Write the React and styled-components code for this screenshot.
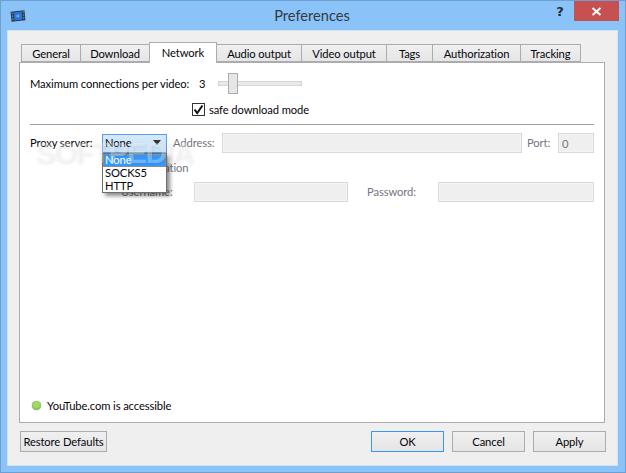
import React from "react";
import styled, { createGlobalStyle } from "styled-components";

const Global = createGlobalStyle`
  html, body { margin: 0; padding: 0; background: #8ac3f8; }
  * { box-sizing: border-box; }
`;

const Window = styled.div`
  width: 626px; height: 473px;
  display: flex; flex-direction: column;
  background: #8ac3f8;
  border: 1px solid #6f9fd2;
  padding: 0 7px 6px 6px;
  font-family: Lato, "Open Sans", sans-serif;
  font-size: 11.2px;
  letter-spacing: -0.1px;
  color: #05050c;
  white-space: nowrap;
  overflow: hidden;
`;
const TitleBar = styled.div`
  height: 29px; flex: none;
  display: flex; align-items: flex-start;
  position: relative;
  margin-right: -6px;
`;
const AppIcon = styled.svg`
  width: 16px; height: 14px; margin: 8px 0 0 3px; flex: none;
`;
const Title = styled.div`
  flex: 1; text-align: center;
  font-size: 14.6px; letter-spacing: 0; line-height: 29px; color: #333a44;
  padding-left: 52px;
`;
const Help = styled.div`
  width: 28px; text-align: center; flex: none;
  font: bold 13px/20px "DejaVu Sans", sans-serif; color: #222b36;
  padding-top: 1px;
`;
const Close = styled.div`
  width: 45px; height: 20px; flex: none;
  background: #c75050; display: flex; align-items: center; justify-content: center;
  margin-right: 5px;
`;
const Client = styled.div`
  flex: 1; min-height: 0;
  display: flex; flex-direction: column;
  background: #efefef;
  border: 1px solid #d4e2ef;
  padding: 11px 12px 13px 11px;
`;
const Tabs = styled.div`
  display: flex; height: 21px; padding-left: 2px; position: relative; z-index: 1; flex: none;
`;
const Tab = styled.div`
  width: ${p => p.$w}px;
  margin-top: ${p => (p.$active ? 0 : 2)}px;
  margin-bottom: ${p => (p.$active ? 0 : 1)}px;
  margin-right: -1px;
  border: 1px solid #acacac;
  border-bottom: ${p => (p.$active ? "none" : "1px solid #acacac")};
  background: ${p => (p.$active ? "#fff" : "linear-gradient(#f0f0f0, #e5e5e5)")};
  text-align: center;
  line-height: ${p => (p.$active ? 19 : 17)}px;
  position: relative;
  z-index: ${p => (p.$active ? 2 : 0)};
`;
const Pane = styled.div`
  flex: 1; min-height: 0;
  margin-top: -1px;
  background: #fff;
  border: 1px solid #acacac;
  padding: 10px 10px 9px;
  display: flex; flex-direction: column;
  position: relative;
`;
const ConnRow = styled.div`
  display: flex; align-items: center; height: 21px; flex: none;
`;
const ConnLabel = styled.span`width: 169px; flex: none;`;
const ConnValue = styled.span`width: 19px; flex: none;`;
const Slider = styled.div`
  width: 84px; height: 21px; flex: none;
  display: flex; align-items: center; position: relative;
`;
const Groove = styled.div`
  width: 100%; height: 5px; background: #e7eae7; border: 1px solid #d6d6d6;
`;
const Handle = styled.div`
  position: absolute; left: 10px; top: 0;
  width: 10px; height: 21px;
  background: #e6e6e6; border: 1px solid #acacac;
`;
const CheckRow = styled.label`
  display: flex; align-items: center; gap: 4px;
  margin: 9px 0 0 162px; height: 13px; flex: none;
`;
const CheckBox = styled.span`
  width: 13px; height: 13px; flex: none; background: #fff; border: 1px solid #333;
  display: flex; align-items: center; justify-content: center;
`;
const Separator = styled.div`
  height: 1px; background: #a0a0a0; margin: 8px 0; flex: none;
`;
const FieldRow = styled.div`
  display: flex; align-items: center; height: 20px; flex: none;
  margin-left: ${p => p.$indent || 0}px;
`;
const FieldLabel = styled.span`
  width: ${p => p.$w}px; flex: none;
  margin-left: ${p => p.$ml || 0}px;
  padding-bottom: 2px;
  color: ${p => (p.$disabled ? "#75757f" : "inherit")};
`;
const TextBox = styled.div`
  width: ${p => p.$w}px; height: 20px; flex: none;
  background: #efefef; border: 1px solid #d9d9d9;
  box-shadow: inset 0 0 0 1px #f4f4f4;
  color: #75757f; line-height: 20px; padding-left: 3px;
`;
const Combo = styled.div`
  width: 65px; height: 19px; flex: none; position: relative;
  background: linear-gradient(#d5e9fa, #c6e2f9);
  border: 1px solid #569de5;
  display: flex; align-items: center; justify-content: space-between;
  padding: 0 5px 1px 2px;
`;
const Arrow = styled.span`
  width: 0; height: 0;
  border-left: 4px solid transparent; border-right: 4px solid transparent;
  border-top: 5px solid #333;
`;
const Popup = styled.div`
  position: absolute; left: -1px; top: 18px; width: 65px; height: 40px;
  background: #fff; border: 1px solid #6d6d6d;
  box-shadow: 3px 3px 4px rgba(0,0,0,.45);
  z-index: 3;
`;
const PopupItem = styled.div`
  height: 13px; line-height: 12px; padding-left: 2px;
  color: ${p => (p.$active ? "#fff" : "#05050c")};
  background: ${p => (p.$active ? "#3399ff" : "transparent")};
  outline: ${p => (p.$active ? "1px dotted #e0861a" : "none")};
  outline-offset: -1px;
`;
const AuthRow = styled.div`
  margin: 7px 0 6px 87px; height: 16px; line-height: 16px; flex: none;
  color: #75757f;
`;
const Status = styled.div`
  margin-top: auto; display: flex; align-items: center; gap: 6px; height: 16px; flex: none;
  padding-left: 2px;
`;
const Dot = styled.span`
  width: 9px; height: 9px; border-radius: 50%; flex: none;
  background: radial-gradient(circle at 50% 40%, #9fdc62 35%, #6a9f45);
  box-shadow: 0 0 1px #555;
`;
const Watermark = styled.div`
  position: absolute; left: 15px; top: 70px; z-index: 4;
  font: bold 30px/40px "Liberation Sans", sans-serif;
  letter-spacing: -1.6px;
  color: rgba(255,255,255,.32);
  text-shadow: 1px 1px 3px rgba(0,0,0,.08);
  pointer-events: none;
`;
const Footer = styled.div`
  display: flex; gap: 8px; height: 21px; margin: 8px -1px 0 1px; flex: none;
`;
const Button = styled.div`
  width: ${p => p.$w || 73}px; height: 21px;
  margin-right: ${p => p.$mr || 0}px;
  border: 1px solid ${p => (p.$default ? "#3399ff" : "#acacac")};
  background: linear-gradient(#f0f0f0, #e5e5e5);
  text-align: center; line-height: 19px;
`;

const tabs = [
  ["General", 60], ["Download", 70], ["Network", 68], ["Audio output", 86],
  ["Video output", 86], ["Tags", 47], ["Authorization", 89], ["Tracking", 61],
];

export default function App() {
  return (
    <Window>
      <Global />
      <TitleBar>
        <AppIcon viewBox="0 0 16 14">
          <g transform="rotate(-6 8 7)">
            <rect x="1" y="2" width="14" height="10" fill="#2a3a50" />
            <rect x="4" y="3" width="8" height="8" fill="#2a76d8" />
            <circle cx="8" cy="7" r="1.6" fill="#6aa6ee" />
            <path d="M2 3h1v1H2zM2 6h1v1H2zM2 9h1v1H2zM13 3h1v1h-1zM13 6h1v1h-1zM13 9h1v1h-1z" fill="#b8c8d8" />
          </g>
        </AppIcon>
        <Title>Preferences</Title>
        <Help>?</Help>
        <Close>
          <svg width="11" height="9" viewBox="0 0 11 9">
            <path d="M1.5 1 L9.5 8 M9.5 1 L1.5 8" stroke="#fff" strokeWidth="2" />
          </svg>
        </Close>
      </TitleBar>
      <Client>
        <Tabs>
          {tabs.map(([t, w]) => (
            <Tab key={t} $w={w} $active={t === "Network"}>{t}</Tab>
          ))}
        </Tabs>
        <Pane>
          <ConnRow>
            <ConnLabel>Maximum connections per video:</ConnLabel>
            <ConnValue>3</ConnValue>
            <Slider>
              <Groove />
              <Handle />
            </Slider>
          </ConnRow>
          <CheckRow>
            <CheckBox>
              <svg width="11" height="11" viewBox="0 0 11 11">
                <path d="M1.5 5.5 L4.2 9 L9.5 1.5" fill="none" stroke="#111" strokeWidth="2" />
              </svg>
            </CheckBox>
            safe download mode
          </CheckRow>
          <Separator />
          <FieldRow>
            <FieldLabel $w={72}>Proxy server:</FieldLabel>
            <Combo>
              None
              <Arrow />
              <Popup>
                <PopupItem $active>None</PopupItem>
                <PopupItem>SOCKS5</PopupItem>
                <PopupItem>HTTP</PopupItem>
              </Popup>
            </Combo>
            <FieldLabel $w={49} $ml={6} $disabled>Address:</FieldLabel>
            <TextBox $w={300} />
            <FieldLabel $w={31} $ml={5} $disabled>Port:</FieldLabel>
            <TextBox $w={36}>0</TextBox>
          </FieldRow>
          <AuthRow>Authentication</AuthRow>
          <FieldRow $indent={91}>
            <FieldLabel $w={73} $disabled>Username:</FieldLabel>
            <TextBox $w={154} />
            <FieldLabel $w={71} $ml={19} $disabled>Password:</FieldLabel>
            <TextBox $w={156} />
          </FieldRow>
          <Status>
            <Dot />
            YouTube.com is accessible
          </Status>
          <Watermark>SOFTPEDIA</Watermark>
        </Pane>
        <Footer>
          <Button $w={87} $mr={256}>Restore Defaults</Button>
          <Button $default>OK</Button>
          <Button>Cancel</Button>
          <Button>Apply</Button>
        </Footer>
      </Client>
    </Window>
  );
}
